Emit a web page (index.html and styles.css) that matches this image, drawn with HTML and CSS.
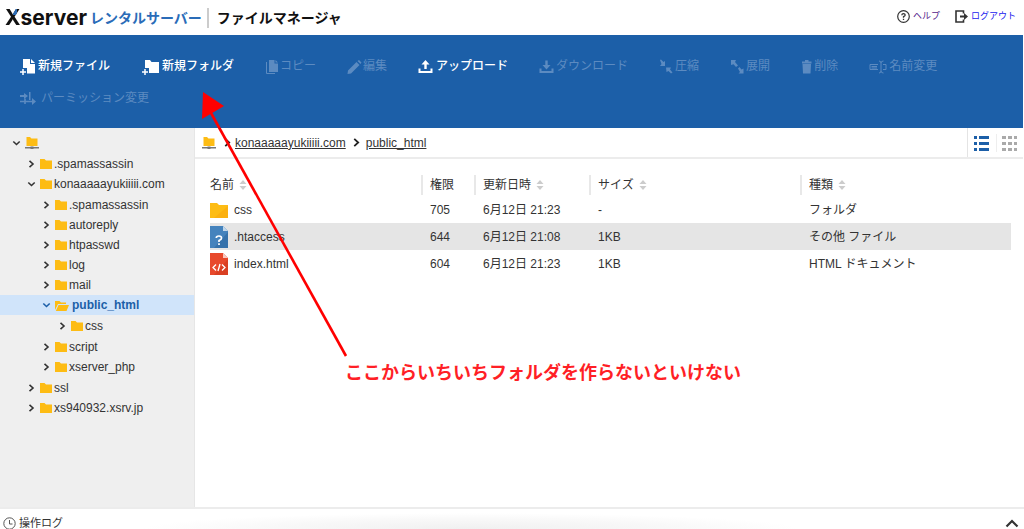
FILE: index.html
```html
<!DOCTYPE html>
<html lang="ja">
<head>
<meta charset="utf-8">
<title>ファイルマネージャ</title>
<link rel="stylesheet" href="styles.css">
</head>
<body>
<svg class="defs" aria-hidden="true">
  <symbol id="folder" viewBox="0 0 12 10"><path d="M0 0H4.500L6 1.500H12V10H0Z" fill="#fdbc14"/></symbol>
  <symbol id="open" viewBox="0 0 14 11"><path d="M0 10V1H4.500L6 2.500H11V4H3L0 10Z" fill="#fdbc14"/><path d="M3.500 5H14L11.500 11H.8Z" fill="#fdbc14"/></symbol>
  <symbol id="server" viewBox="0 0 14 12"><path d="M1.500 0H5L6.500 1.500H12.500V9H1.500Z" fill="#fdbc14"/><path d="M0 10.800H14M5.500 10.800H8.500" stroke="#777" stroke-width="1.400"/><path d="M5.500 9.500H8.500V12H5.500Z" fill="#777"/></symbol>
  <symbol id="right" viewBox="0 0 8 8"><path d="M2 .8 5.500 4 2 7.200" fill="none" stroke="currentColor" stroke-width="1.600"/></symbol>
  <symbol id="down" viewBox="0 0 8 8"><path d="M.8 2.500 4 5.500 7.200 2.500" fill="none" stroke="currentColor" stroke-width="1.600"/></symbol>
  <symbol id="sort" viewBox="0 0 8 10"><path d="M4 0 7.500 4H.5ZM4 10 .5 6H7.500Z" fill="#ccc"/></symbol>
</svg>

<header class="header">
  <h1 class="brand"><span class="brand-name"><span class="brand-x">X</span>server</span><span class="brand-service">レンタルサーバー</span><span class="brand-app">ファイルマネージャ</span></h1>
  <nav class="links">
    <a class="link visited" href="#help"><svg width="13" height="13" viewBox="0 0 13 13" fill="none" stroke="#333"><circle cx="6.500" cy="6.500" r="5.800" stroke-width="1.200"/><path d="M4.800 5.200Q4.900 3.600 6.500 3.600T8.200 5.100Q8.200 6 6.500 6.700V7.700M6.500 8.700V10" stroke-width="1.300"/></svg>ヘルプ</a>
    <a class="link" href="#logout"><svg width="13" height="13" viewBox="0 0 13 13"><path d="M8.500 3.500V1H1V12H8.500V9.500" fill="none" stroke="#333" stroke-width="1.600"/><path d="M5 5.500H9V3L13 6.500 9 10V7.500H5Z" fill="#333"/></svg>ログアウト</a>
  </nav>
</header>

<div class="toolbar">
  <button class="tool"><svg width="17" height="17" viewBox="0 0 17 17" fill="currentColor"><path d="M3 1H10V6H15V15.500H7V10H3Z"/><path d="M11 1 15 5H11Z"/><path d="M3 11V17M0 14H6" stroke="currentColor" stroke-width="1.500"/></svg>新規ファイル</button>
  <button class="tool"><svg width="20" height="17" viewBox="0 0 20 17" fill="currentColor"><path d="M4 2H9L10.500 4H18V15H8V10H4Z"/><path d="M4 11V17M1 14H7" stroke="currentColor" stroke-width="1.500"/></svg>新規フォルダ</button>
  <button class="tool" disabled><svg width="14" height="17" viewBox="0 0 14 17" fill="currentColor"><path d="M4 2H9.500V5.500H13V14H4ZM10.500 2 13 4.500H10.500Z"/><path d="M1.500 4V15.500H10" fill="none" stroke="currentColor"/></svg>コピー</button>
  <button class="tool" disabled><svg width="15" height="17" viewBox="0 0 15 17" fill="currentColor"><path d="M1 12.500 9.500 4 12.500 7 4 15.500.5 16ZM10.500 3 12 2 14.500 4.500 13.500 6Z"/></svg>編集</button>
  <button class="tool"><svg width="17" height="17" viewBox="0 0 17 17" fill="currentColor"><path d="M7.500 2 11.500 6.500H8.700V11H6.300V6.500H3.500Z"/><path d="M1.500 10.500V14H13.500V10.500" fill="none" stroke="currentColor" stroke-width="2"/></svg>アップロード</button>
  <button class="tool" disabled><svg width="16" height="17" viewBox="0 0 16 17" fill="currentColor"><path d="M6.300 2.500H8.700V7H11.500L7.500 11.500 3.500 7H6.300Z"/><path d="M1.500 10.500V14H13.500V10.500" fill="none" stroke="currentColor" stroke-width="2"/></svg>ダウンロード</button>
  <button class="tool" disabled><svg width="15" height="17" viewBox="0 0 15 17" fill="currentColor"><path d="M1 2 2 1.500 4.500 4 6 3V8H1L2.500 6ZM7 9.500H12L11 11.500 13.500 14.500 12 15.500 9.500 13 7.500 14Z"/></svg>圧縮</button>
  <button class="tool" disabled><svg width="15" height="17" viewBox="0 0 15 17" fill="currentColor"><path d="M1 2H6L5 4 8 7.500 6 9 3.500 6.200 1 7ZM8 10.500 9.500 9 11.500 11.500 13.500 10.500V15.500H8.500L10 14Z"/></svg>展開</button>
  <button class="tool" disabled><svg width="12" height="17" viewBox="0 0 12 17" fill="currentColor"><path d="M1 3.500H4V2H7.500V3.500H10.500V5.500H1ZM1.500 6H10L9.500 15.500H2Z"/></svg>削除</button>
  <button class="tool" disabled><svg width="19" height="17" viewBox="0 0 19 17" fill="none" stroke="currentColor"><path d="M9 6.500H1V11.500H9M2.500 8.500H8M2.500 10H8M10 3Q12 3 12 5V13Q12 15 10 15M14.500 3Q12 3 12 5M12 13Q12 15 14.500 15M14 6.500H17V11.500H14"/></svg>名前変更</button>
  <button class="tool" disabled><svg width="20" height="17" viewBox="0 0 20 17" fill="currentColor"><path d="M0 5H4V3L8 6 4 9V7H0ZM9 2H10.500V10H9Z"/><path d="M0 11.500H13M5 8.500V14" stroke="currentColor" stroke-width="1.600"/><path d="M12 8 16 11.500 12 15Z"/></svg>パーミッション変更</button>
</div>

<main class="workspace">
  <nav class="sidebar" aria-label="フォルダ">
    <ul class="tree level-0">
      <li><a class="node" href="#root"><svg class="chev"><use href="#down"/></svg><svg class="server"><use href="#server"/></svg></a>
        <ul class="tree level-1">
          <li><a class="node" href="#t1"><svg class="chev"><use href="#right"/></svg><svg class="folder"><use href="#folder"/></svg>.spamassassin</a></li>
          <li><a class="node" href="#t2"><svg class="chev"><use href="#down"/></svg><svg class="folder"><use href="#folder"/></svg>konaaaaayukiiiii.com</a>
            <ul class="tree level-2">
              <li><a class="node" href="#t3"><svg class="chev"><use href="#right"/></svg><svg class="folder"><use href="#folder"/></svg>.spamassassin</a></li>
              <li><a class="node" href="#t4"><svg class="chev"><use href="#right"/></svg><svg class="folder"><use href="#folder"/></svg>autoreply</a></li>
              <li><a class="node" href="#t5"><svg class="chev"><use href="#right"/></svg><svg class="folder"><use href="#folder"/></svg>htpasswd</a></li>
              <li><a class="node" href="#t6"><svg class="chev"><use href="#right"/></svg><svg class="folder"><use href="#folder"/></svg>log</a></li>
              <li><a class="node" href="#t7"><svg class="chev"><use href="#right"/></svg><svg class="folder"><use href="#folder"/></svg>mail</a></li>
              <li><a class="node selected" href="#t8"><svg class="chev"><use href="#down"/></svg><svg class="open"><use href="#open"/></svg>public_html</a>
                <ul class="tree level-3">
                  <li><a class="node" href="#t9"><svg class="chev"><use href="#right"/></svg><svg class="folder"><use href="#folder"/></svg>css</a></li>
                </ul>
              </li>
              <li><a class="node" href="#t10"><svg class="chev"><use href="#right"/></svg><svg class="folder"><use href="#folder"/></svg>script</a></li>
              <li><a class="node" href="#t11"><svg class="chev"><use href="#right"/></svg><svg class="folder"><use href="#folder"/></svg>xserver_php</a></li>
            </ul>
          </li>
          <li><a class="node" href="#t12"><svg class="chev"><use href="#right"/></svg><svg class="folder"><use href="#folder"/></svg>ssl</a></li>
          <li><a class="node" href="#t13"><svg class="chev"><use href="#right"/></svg><svg class="folder"><use href="#folder"/></svg>xs940932.xsrv.jp</a></li>
        </ul>
      </li>
    </ul>
  </nav>

  <section class="content">
    <div class="pathbar">
      <nav class="crumbs"><svg class="server"><use href="#server"/></svg><svg class="sep first"><use href="#right"/></svg><a href="#domain">konaaaaayukiiiii.com</a><svg class="sep"><use href="#right"/></svg><a href="#public">public_html</a></nav>
      <div class="views">
        <button class="view list" aria-label="リスト表示"><svg width="16" height="16" viewBox="0 0 16 16" fill="currentColor"><path d="M0 1H3V4H0ZM5 1H15V4H5ZM0 7H3V10H0ZM5 7H15V10H5ZM0 13H3V16H0ZM5 13H15V16H5Z"/></svg></button>
        <button class="view grid" aria-label="アイコン表示"><svg width="16" height="16" viewBox="0 0 16 16" fill="currentColor"><path d="M0 1H4V4H0ZM6 1H10V4H6ZM12 1H15V4H12ZM0 7H4V10H0ZM6 7H10V10H6ZM12 7H15V10H12ZM0 13H4V16H0ZM6 13H10V16H6ZM12 13H15V16H12Z"/></svg></button>
      </div>
    </div>
    <div class="listing">
      <table class="files">
        <colgroup><col class="c-name"><col class="c-mode"><col class="c-date"><col class="c-size"><col></colgroup>
        <thead>
          <tr><th><span class="head">名前<svg class="sort"><use href="#sort"/></svg></span></th><th><span class="head">権限</span></th><th><span class="head">更新日時<svg class="sort"><use href="#sort"/></svg></span></th><th><span class="head">サイズ<svg class="sort"><use href="#sort"/></svg></span></th><th><span class="head">種類<svg class="sort"><use href="#sort"/></svg></span></th></tr>
        </thead>
        <tbody>
          <tr><td><span class="file"><svg width="18" height="22" viewBox="0 0 18 22"><path d="M0 4H7L9 6H18V19H0Z" fill="#fdbc14"/><path d="M18 7V19H4Z" fill="#fbb010"/></svg>css</span></td><td>705</td><td>6月12日 21:23</td><td>-</td><td>フォルダ</td></tr>
          <tr class="active"><td><span class="file"><svg width="18" height="22" viewBox="0 0 18 22"><path d="M0 0H13L18 5V22H0Z" fill="#4583bd"/><path d="M18 6V22H4Z" fill="#3672ab"/><path d="M13 0V5H18Z" fill="#c3d8ea"/><path d="M6.300 12Q6.300 10 9 10T11.500 12.200Q11.500 13.500 9 14.500V16M9 17.300V19" fill="none" stroke="#fff" stroke-width="1.700"/></svg>.htaccess</span></td><td>644</td><td>6月12日 21:08</td><td>1KB</td><td>その他 ファイル</td></tr>
          <tr><td><span class="file"><svg width="18" height="22" viewBox="0 0 18 22"><path d="M0 0H13L18 5V22H0Z" fill="#e8492c"/><path d="M18 6V22H4Z" fill="#d93f22"/><path d="M13 0V5H18Z" fill="#f8c8bf"/><path d="M6 11.500 3 14.500 6 17.500M12 11.500 15 14.500 12 17.500M10 11 8 18" fill="none" stroke="#fff" stroke-width="1.300"/></svg>index.html</span></td><td>604</td><td>6月12日 21:23</td><td>1KB</td><td>HTML ドキュメント</td></tr>
        </tbody>
      </table>
    </div>
  </section>
</main>

<footer class="logbar">
  <span class="log"><svg width="13" height="13" viewBox="0 0 13 13" fill="none" stroke="#555"><circle cx="6.500" cy="6.500" r="5.700"/><path d="M6.500 3V7H9.500"/></svg>操作ログ</span>
  <button class="expand" aria-label="開く"><svg width="14" height="9" viewBox="0 0 14 9"><path d="M1.500 7.500 7 2 12.500 7.500" fill="none" stroke="#333" stroke-width="2.200"/></svg></button>
</footer>

<svg class="arrow" width="160" height="270" viewBox="0 0 160 270" aria-hidden="true"><path d="M156 265 21 22" stroke="#f00" stroke-width="2.600"/><path d="M13 1 34 15 12 28Z" fill="#f00"/></svg>
<p class="note">ここからいちいちフォルダを作らないといけない</p>
</body>
</html>
```
FILE: styles.css
```css
* { box-sizing: border-box; }
body {
  margin: 0;
  height: 100vh;
  overflow: hidden;
  position: relative;
  display: flex;
  flex-direction: column;
  background: #fff;
  color: #333;
  font: 12px/20px "Liberation Sans", "Noto Sans CJK JP", sans-serif;
}
svg { flex: none; }
a { color: inherit; }
button { border: 0; padding: 0; background: none; font: inherit; color: inherit; }
.defs { position: absolute; width: 0; height: 0; }

.header { flex: none; height: 35px; padding: 0 8px 0 5px; display: flex; align-items: center; justify-content: space-between; }
.brand { margin: 0; display: flex; align-items: center; color: #111; font-size: 14px; line-height: 20px; white-space: nowrap; }
.brand-name { font-family: Inter, sans-serif; font-size: 21px; margin-right: 3px; }
.brand-x { color: transparent; background: linear-gradient(#2a6cb8, #2a6cb8) 8px 0 / 4px 10px no-repeat, #111; -webkit-background-clip: text; background-clip: text; }
.brand-service { color: #2a6cb8; }
.brand-app { margin-left: 5px; padding-left: 8px; border-left: 2px solid #ccc; }
.links { display: flex; gap: 15px; margin-bottom: 3px; }
.link { display: flex; align-items: center; gap: 3px; color: #22e; font-size: 9px; text-decoration: none; }
.link.visited { color: #551a8b; }

.toolbar { flex: none; margin-right: 1px; padding: 15px 20px 14px; display: flex; flex-wrap: wrap; column-gap: 31px; background: #1c5fa8; }
.tool { height: 32px; display: flex; align-items: center; gap: 1px; color: #fff; font-weight: 500; white-space: nowrap; }
.tool:disabled { color: #5c8bc1; font-weight: 400; }

.workspace { flex: 1; min-height: 0; display: flex; }
.sidebar { flex: none; width: 195px; padding-top: 5px; background: #efefef; border-right: 1px solid #e6e6e6; }
.tree { list-style: none; margin: 0; padding: 1px 0; }
.level-0 { padding-top: 0; }
.node { height: 20px; display: flex; align-items: center; text-decoration: none; white-space: nowrap; }
.level-0 .node { padding-left: 12px; }
.level-1 .node { padding-left: 27px; }
.level-2 .node { padding-left: 42px; }
.level-3 .node { padding-left: 58px; }
.chev { width: 9px; height: 8px; margin-right: 4px; }
.folder { width: 12px; height: 10px; margin-right: 2px; }
.open { width: 14px; height: 11px; margin-right: 3px; }
.server { width: 14px; height: 12px; }
.selected { background: #d0e4fa; color: #1c5fa8; font-weight: 700; }

.content { flex: 1; min-width: 0; }
.pathbar { height: 31px; margin-right: 1px; padding-left: 7px; display: flex; justify-content: space-between; border-bottom: 2px solid #ececec; }
.crumbs { display: flex; align-items: center; }
.crumbs a { text-underline-offset: 1px; }
.sep { width: 9px; height: 9px; margin: 0 5px 0 6px; color: #222; }
.sep.first { margin: 0 3px 0 7px; }
.views { display: flex; align-items: center; border-left: 1px solid #e4e4e4; }
.view { width: 29px; height: 18px; display: flex; align-items: center; justify-content: center; }
.list { color: #1c5fa8; border-right: 1px solid #eee; }
.grid { width: 26px; color: #aaa; }
.listing { padding: 16px 13px 0 15px; }
.files { width: 100%; table-layout: fixed; border-collapse: collapse; }
.c-name { width: 211px; }
.c-mode { width: 53px; }
.c-date { width: 115px; }
.c-size { width: 211px; }
.files th { height: 21px; padding: 0 0 1px; text-align: left; font-weight: 400; }
.files td { height: 27px; padding: 0 0 0 9px; white-space: nowrap; }
.files td:first-child { padding-left: 0; }
.head { display: flex; align-items: center; gap: 5px; padding-left: 7px; border-left: 2px solid #e8e8e8; }
.files th:first-child .head { padding: 0; border: 0; }
.sort { width: 8px; height: 10px; }
.file { display: flex; align-items: center; gap: 6px; }
.active { background: #e5e5e5; }

.logbar { flex: none; height: 22px; padding: 4px 5px 0 3px; overflow: hidden; display: flex; align-items: flex-start; justify-content: space-between; border-top: 2px solid #ececec; background: radial-gradient(ellipse 32% 16px at 46% 100%, #f0f0f0, #f8f8f8 60%, #fff); }
.log { display: flex; align-items: center; gap: 3px; font-size: 11px; }
.expand { height: 20px; display: flex; align-items: center; }

/* Annotation laid over the file manager */
.arrow { position: absolute; left: 190px; top: 91px; pointer-events: none; }
.note { position: absolute; left: 345px; top: 361px; margin: 0; color: #ff1f26; font-size: 18px; line-height: 24px; font-weight: 700; white-space: nowrap; }
```
